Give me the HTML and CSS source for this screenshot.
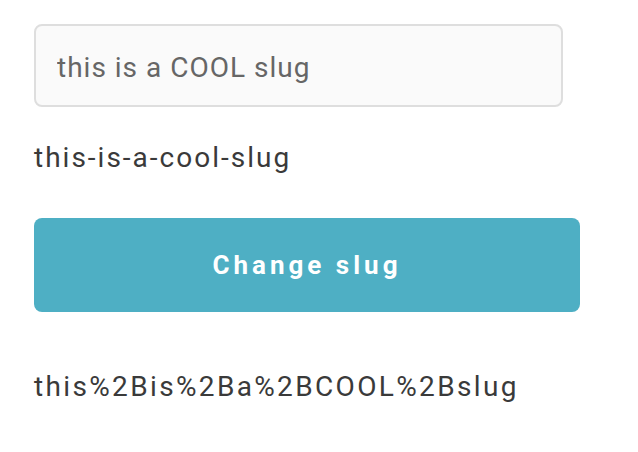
FILE: index.html
```html
<!DOCTYPE html>
<html lang="en">
<head>
<meta charset="utf-8">
<title>Slug</title>
<link rel="stylesheet" href="styles.css">
</head>
<body>
<main class="page">
  <input class="slug-input" type="text" value="this is a COOL slug">
  <p class="slug-text">this-is-a-cool-slug</p>
  <button class="slug-button" type="button">Change slug</button>
  <p class="slug-encoded">this%2Bis%2Ba%2BCOOL%2Bslug</p>
</main>
</body>
</html>
```
FILE: styles.css
```css
html, body {
  margin: 0;
  padding: 0;
  background: #ffffff;
}

.page {
  display: flex;
  flex-direction: column;
  align-items: flex-start;
  padding: 24px 0 0 34px;
  font-family: Roboto, "Liberation Sans", sans-serif;
}

.slug-input {
  box-sizing: border-box;
  width: 529px;
  height: 83px;
  margin: 0;
  padding: 3px 21px 0;
  border: 2px solid #dedede;
  border-radius: 8px;
  background: #fafafa;
  font-family: inherit;
  font-size: 28px;
  letter-spacing: 1px;
  color: #666666;
  outline: none;
}

.slug-text {
  margin: 36px 0 0;
  font-size: 28px;
  line-height: 30px;
  letter-spacing: 2px;
  color: #3a3a3a;
}

.slug-button {
  box-sizing: border-box;
  width: 546px;
  height: 94px;
  margin: 45px 0 0;
  border: 0;
  border-radius: 8px;
  background: #4eafc4;
  color: #ffffff;
  font-family: inherit;
  font-size: 26px;
  font-weight: 700;
  letter-spacing: 4px;
  cursor: pointer;
}

.slug-encoded {
  margin: 60px 0 0;
  font-size: 28px;
  line-height: 30px;
  letter-spacing: 2.35px;
  color: #3a3a3a;
}
```
